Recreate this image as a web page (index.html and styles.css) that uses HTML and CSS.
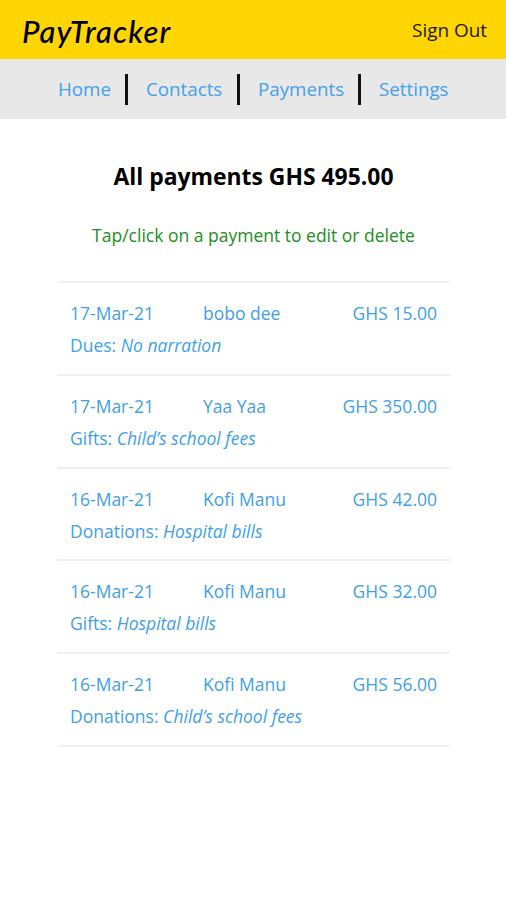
FILE: index.html
```html
<!DOCTYPE html>
<html lang="en">
<head>
<meta charset="utf-8">
<title>PayTracker</title>
<link rel="stylesheet" href="styles.css">
</head>
<body>
<header class="topbar"><a class="brand">PayTracker</a><a class="signout">Sign Out</a></header>
<nav class="nav"><a class="home">Home</a><a class="contacts">Contacts</a><a class="pay">Payments</a><a class="settings">Settings</a></nav>
<main>
<h1>All payments GHS 495.00</h1>
<p class="hint">Tap/click on a payment to edit or delete</p>
<ul class="list">
<li><div class="row"><span class="date">17-Mar-21</span><span class="name">bobo dee</span><span class="amt">GHS 15.00</span></div><div class="note">Dues: <em>No narration</em></div></li>
<li><div class="row"><span class="date">17-Mar-21</span><span class="name">Yaa Yaa</span><span class="amt">GHS 350.00</span></div><div class="note">Gifts: <em>Child’s school fees</em></div></li>
<li><div class="row"><span class="date">16-Mar-21</span><span class="name">Kofi Manu</span><span class="amt">GHS 42.00</span></div><div class="note">Donations: <em>Hospital bills</em></div></li>
<li><div class="row"><span class="date">16-Mar-21</span><span class="name">Kofi Manu</span><span class="amt">GHS 32.00</span></div><div class="note">Gifts: <em>Hospital bills</em></div></li>
<li><div class="row"><span class="date">16-Mar-21</span><span class="name">Kofi Manu</span><span class="amt">GHS 56.00</span></div><div class="note">Donations: <em>Child’s school fees</em></div></li>
</ul>
</main>
</body>
</html>
```
FILE: styles.css
```css
* { box-sizing: border-box; }
body { margin: 0; background: #fff; color: #000; font-family: "Open Sans", sans-serif; font-size: 18px; }
.topbar { height: 59px; background: #ffd504; display: flex; justify-content: space-between; align-items: center; padding: 0 19px 0 22px; }
.brand { font-family: "Lato", sans-serif; font-style: italic; font-size: 31px; font-weight: 500; letter-spacing: 1.1px; padding-top: 2px; }
.signout { font-size: 18.9px; color: #1c1a0a; }
.nav { height: 60px; background: #e8e8e8; color: #43a0ea; display: flex; align-items: center; padding-left: 58px; font-size: 18.75px; }
.nav a { height: 31px; line-height: 29px; white-space: nowrap; }
.nav a:not(:last-child) { border-right: 3px solid #111; }
.home { width: 70px; }
.contacts, .pay, .settings { padding-left: 18px; }
.contacts { width: 112px; }
.pay { width: 121px; }
h1 { margin: 43px 0 0; padding-left: 1px; font-size: 22.9px; line-height: 30px; text-align: center; font-weight: 700; }
.hint { margin: 31px 0 0; padding-left: 1px; font-size: 17.5px; line-height: 24px; text-align: center; color: #218f21; }
.list { list-style: none; margin: 34px 56px 0 57px; padding: 0; border-top: 2px solid #f0f0f0; color: #3f9fea; }
.list li { height: 92.7px; padding: 14px 13px 0; border-bottom: 2px solid #f0f0f0; line-height: 32px; font-size: 17.5px; }
.list li:first-child { height: 93px; }
.row { display: flex; }
.date { width: 133px; }
.name { flex: 1; }
```
